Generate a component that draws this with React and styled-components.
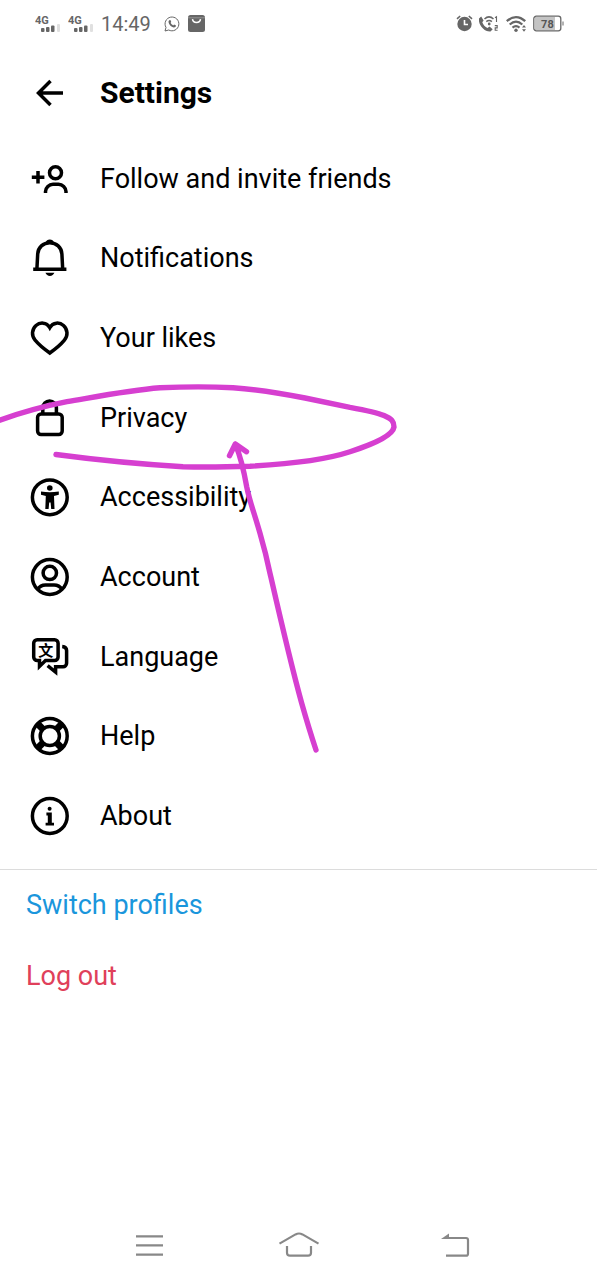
import styled, { createGlobalStyle } from "styled-components";

const color = {
  text: "#000",
  status: "#666",
  nav: "#888",
  line: "#dcdcdc",
  blue: "#1a96dc",
  red: "#e0405a",
  marker: "#d63fd0",
};

const GlobalStyle = createGlobalStyle`
  * {
    box-sizing: border-box;
  }

  body {
    margin: 0;
    background-color: #fff;
    color: ${color.text};
    font-family: Roboto, "Noto Sans CJK SC", sans-serif;
  }

  button {
    padding: 0;
    border: 0;
    background: none;
    color: inherit;
    font: inherit;
    cursor: pointer;
  }

  a {
    color: inherit;
    text-decoration: none;
  }

  svg {
    display: block;
    flex-shrink: 0;
  }
`;

const Page = styled.div`
  position: relative;
  display: flex;
  flex-direction: column;
  min-height: 100vh;
  overflow-x: hidden;
`;

const StatusBar = styled.div`
  display: flex;
  justify-content: space-between;
  align-items: center;
  height: 47px;
  padding: 0 33px 0 35px;
  color: ${color.status};
`;

const StatusGroup = styled.div`
  display: flex;
  align-items: center;
  gap: ${(props) => props.$gap}px;
`;

const StatusIcons = styled(StatusGroup)`
  padding-left: 7px;
`;

const Time = styled.time`
  font-size: 20px;
  line-height: 24px;
`;

const Header = styled.header`
  display: flex;
  align-items: center;
  gap: 28px;
  height: 92px;
  padding: 0 28px;

  h1 {
    margin: 0;
    font-size: 30px;
    line-height: 36px;
    font-weight: 700;
  }
`;

const MenuList = styled.ul`
  display: grid;
  grid-auto-rows: 1fr;
  min-height: 56vh;
  margin: 0;
  padding: 0;
  list-style: none;
`;

const MenuLink = styled.a`
  display: flex;
  align-items: center;
  gap: 28px;
  height: 100%;
  padding: 0 28px;
  font-size: 27px;
  line-height: 32px;
`;

const Actions = styled.div`
  display: flex;
  flex-direction: column;
  align-items: flex-start;
  width: 100%;
  margin-top: 13px;
  padding: 0 26px;
  border-top: 1px solid ${color.line};
`;

const ActionButton = styled.button`
  height: 71px;
  color: ${(props) => props.$color};
  font-size: 27px;
  line-height: 32px;
`;

const NavBar = styled.nav`
  display: flex;
  height: 70px;
  margin-top: auto;
  padding: 0 12.5%;
  color: ${color.nav};
`;

const NavButton = styled.button`
  display: flex;
  flex: 1;
  align-items: center;
  justify-content: center;
`;

const Marker = styled.svg`
  position: absolute;
  top: 0;
  left: 0;
  pointer-events: none;
`;

const Icon = ({ children }) => (
  <svg
    width="44"
    height="44"
    viewBox="0 0 44 44"
    fill="none"
    stroke="currentColor"
    strokeWidth="3.5"
    aria-hidden="true"
  >
    {children}
  </svg>
);

const BackIcon = () => (
  <Icon>
    <path d="M35 22H10.5M22.5 10 10.5 22l12 12" />
  </Icon>
);

const FollowIcon = () => (
  <Icon>
    <circle cx="27.5" cy="15.7" r="6" />
    <path d="M17.500 36v-1.500a7.500 7.500 0 0 1 7.500-7.200h5.500a7.500 7.500 0 0 1 7.500 7.200V36" />
    <path d="M10 14v12.600M3.800 20.300h12.600" />
  </Icon>
);

const BellIcon = () => (
  <Icon>
    <path d="M8.900 33.200 9.700 18C10.100 11.200 15.200 6.800 21.800 6.800S33.500 11.200 33.900 18l.8 15.200" />
    <path d="M5.200 33.200h33.200" />
    <path d="M17.600 6.600c.6-2 2-3.200 4.200-3.200s3.600 1.200 4.200 3.200z" fill="currentColor" stroke="none" />
    <path d="M17.400 36.700h9c-.8 2-2.400 3.200-4.500 3.200s-3.700-1.200-4.500-3.200z" fill="currentColor" stroke="none" />
  </Icon>
);

const HeartIcon = () => (
  <Icon>
    <path d="M21.800 11.600C18.600 5.900 11.800 6.100 8 9.500c-4.400 4-4.600 10.300-.9 14.700C10.400 28.200 16 33 21.800 37c5.800-4 11.300-8.800 14.600-12.800 3.700-4.400 3.500-10.700-.9-14.700-3.800-3.400-10.500-3.600-13.700 2.100z" />
  </Icon>
);

const LockIcon = () => (
  <Icon>
    <rect x="9.600" y="17.900" width="24.600" height="20.600" rx="3.400" />
    <path d="M14.800 17.600V11.800a6.800 6.800 0 0 1 13.600 0v5.800" />
  </Icon>
);

const AccessibilityIcon = () => (
  <Icon>
    <circle cx="21.800" cy="22.300" r="17.400" />
    <circle cx="21.800" cy="13" r="2.800" fill="currentColor" stroke="none" />
    <path
      d="M13 16.600c6 .9 11.600.9 17.800 0v3.200l-4.800 1.100.5 13h-3.300l-.6-6.400h-1.400l-.6 6.400h-3.300l.5-13-4.800-1.100z"
      fill="currentColor"
      stroke="none"
    />
  </Icon>
);

const AccountIcon = () => (
  <Icon>
    <circle cx="21.800" cy="22" r="17.400" />
    <circle cx="21.800" cy="17.900" r="6.700" />
    <path d="M9.500 34.600c2-3.200 4.600-4.600 8-4.600h8.600c3.400 0 6 1.400 8 4.600" />
  </Icon>
);

const LanguageIcon = () => (
  <Icon>
    <path d="M11.500 25.600v5.800l6-5.800h9.100a3.500 3.500 0 0 0 3.500-3.500V8.200a3.500 3.500 0 0 0-3.500-3.500H9.200a3.500 3.500 0 0 0-3.500 3.500v13.900a3.500 3.500 0 0 0 3.500 3.500z" />
    <path d="M34.200 11.600c2.800.2 4.400 1.400 4.400 4v12.600a3.500 3.500 0 0 1-3.500 3.500h-7.500v5.300l-8-6.400" />
    <text
      x="17.800"
      y="20.500"
      textAnchor="middle"
      fontFamily="'Noto Sans CJK SC', sans-serif"
      fontSize="15"
      fontWeight="700"
      fill="currentColor"
      stroke="none"
    >
      文
    </text>
  </Icon>
);

const HelpIcon = () => (
  <Icon>
    <circle cx="21.800" cy="22" r="17.400" />
    <circle cx="21.800" cy="22" r="9.600" />
    <path
      strokeWidth="7"
      d="m10.200 10.400 5.200 5.200M33.400 10.400l-5.200 5.200M10.200 33.600l5.200-5.200M33.400 33.600l-5.200-5.200"
    />
  </Icon>
);

const AboutIcon = () => (
  <Icon>
    <circle cx="21.800" cy="22" r="17.400" />
    <circle cx="21.600" cy="14.800" r="2" fill="currentColor" stroke="none" />
    <path
      d="M18.400 18.600h5.400v10.200h2.200v2.800h-8.400v-2.800h2.200v-7.400h-1.400z"
      fill="currentColor"
      stroke="none"
    />
  </Icon>
);

const SignalIcon = () => (
  <svg width="27" height="24" viewBox="0 0 27 24" fill="currentColor">
    <text x="0" y="12" fontSize="11" fontWeight="700">
      4G
    </text>
    <rect x="6" y="16" width="3.500" height="4" rx="1" />
    <rect x="11" y="15" width="3.500" height="5" rx="1" />
    <rect x="16" y="13.500" width="3.500" height="6.500" rx="1" />
    <rect x="22" y="12" width="3" height="8" rx="1" opacity="0.200" />
  </svg>
);

const ChatIcon = () => (
  <svg width="16" height="16" viewBox="0 0 16 16" fill="none" stroke="currentColor">
    <path d="M1 15l1-3.600a6.900 6.900 0 1 1 2.700 2.600z" />
    <path
      d="M5.200 4.200l1.200-.3.900 2-.7.900c.5 1.200 1.400 2 2.600 2.600l.9-.8 1.900 1c0 1.200-.9 2-2 2C7.300 11.400 4.500 8 4.500 5.800c0-.7.3-1.300.7-1.600z"
      fill="currentColor"
      stroke="none"
    />
  </svg>
);

const BagIcon = () => (
  <svg width="17" height="17" viewBox="0 0 17 17" fill="none">
    <rect width="17" height="17" rx="2.500" fill="currentColor" />
    <path d="M0 2.800h17" stroke="#fff" strokeWidth="0.600" opacity="0.500" />
    <path d="M4.500 4.200c.6 4.400 7.400 4.400 8 0" stroke="#fff" strokeWidth="1.500" />
  </svg>
);

const AlarmIcon = () => (
  <svg width="17" height="17" viewBox="0 0 17 17" fill="none">
    <circle cx="8.500" cy="9" r="7.200" fill="currentColor" />
    <path d="M1 3.800 4.200 1M16 3.800 12.800 1" stroke="currentColor" strokeWidth="1.600" />
    <path d="M8.500 5v4.500h3.500" stroke="#fff" strokeWidth="1.600" />
  </svg>
);

const WifiCallIcon = () => (
  <svg width="21" height="18" viewBox="0 0 21 18" fill="none" stroke="currentColor">
    <path
      d="M0 3.500 2.200 1.600l2.400 3.800-1.300 1.800c.8 2.400 2.800 4.800 5.200 5.800l2-1.400 3.200 2.600-2.200 2.300C5.200 17-1 9.500 0 3.500z"
      fill="currentColor"
      stroke="none"
    />
    <path d="M5.500 4c2.800-2.600 6.200-2.600 9 0M7.300 6.600c1.800-1.500 3.800-1.500 5.600 0" strokeWidth="1.500" />
    <circle cx="10.200" cy="9" r="1.400" fill="currentColor" stroke="none" />
    <path d="M16 2.800 17.500 1.800V7M15.800 10.600h2.400v2.300h-2v2.300h2.400" strokeWidth="1.100" />
  </svg>
);

const WifiIcon = () => (
  <svg width="21" height="18" viewBox="0 0 21 18" fill="none" stroke="currentColor">
    <path d="M.8 6.200c5.800-5.300 12.600-5.300 18.400 0" strokeWidth="2.400" />
    <path d="M3.700 9.500c4-3.600 8.600-3.600 12.600 0M6.500 12.700c2.300-2 4.700-2 7 0" strokeWidth="2.200" />
    <circle cx="10" cy="15.300" r="1.700" fill="currentColor" stroke="none" />
    <path d="m16 12.500 2-2.500 2 2.500zM16 14.200l2 2.500 2-2.500z" fill="currentColor" stroke="none" />
  </svg>
);

const BatteryIcon = () => (
  <svg width="31" height="17" viewBox="0 0 31 17" fill="none">
    <rect x="2" y="2" width="20" height="13" fill="#c4c4c4" />
    <rect x="0.800" y="1.200" width="27" height="14.600" rx="2.500" stroke="currentColor" strokeWidth="1.300" />
    <path d="M30 6.500v4" stroke="currentColor" />
    <text x="14.400" y="12.500" textAnchor="middle" fontSize="11" fontWeight="700" fill="#555">
      78
    </text>
  </svg>
);

const menuItems = [
  { label: "Follow and invite friends", icon: FollowIcon },
  { label: "Notifications", icon: BellIcon },
  { label: "Your likes", icon: HeartIcon },
  { label: "Privacy", icon: LockIcon },
  { label: "Accessibility", icon: AccessibilityIcon },
  { label: "Account", icon: AccountIcon },
  { label: "Language", icon: LanguageIcon },
  { label: "Help", icon: HelpIcon },
  { label: "About", icon: AboutIcon },
];

const NavIcon = ({ children }) => (
  <svg
    width="56"
    height="32"
    viewBox="0 0 56 32"
    fill="none"
    stroke="currentColor"
    strokeWidth="2.200"
    aria-hidden="true"
  >
    {children}
  </svg>
);

const App = () => {
  return (
    <>
      <GlobalStyle />
      <Page>
        <StatusBar>
          <StatusGroup $gap={6}>
            <SignalIcon />
            <SignalIcon />
            <Time>14:49</Time>
            <StatusIcons $gap={8}>
              <ChatIcon />
              <BagIcon />
            </StatusIcons>
          </StatusGroup>
          <StatusGroup $gap={6}>
            <AlarmIcon />
            <WifiCallIcon />
            <WifiIcon />
            <BatteryIcon />
          </StatusGroup>
        </StatusBar>

        <Header>
          <button type="button" aria-label="Back">
            <BackIcon />
          </button>
          <h1>Settings</h1>
        </Header>

        <MenuList>
          {menuItems.map(({ label, icon: ItemIcon }) => (
            <li key={label}>
              <MenuLink href="#">
                <ItemIcon />
                {label}
              </MenuLink>
            </li>
          ))}
        </MenuList>

        <Actions>
          <ActionButton type="button" $color={color.blue}>
            Switch profiles
          </ActionButton>
          <ActionButton type="button" $color={color.red}>
            Log out
          </ActionButton>
        </Actions>

        <NavBar>
          <NavButton type="button" aria-label="Recent apps">
            <NavIcon>
              <path d="M15 7.300h27M15 16.300h27M15 25.600h27" />
            </NavIcon>
          </NavButton>
          <NavButton type="button" aria-label="Home">
            <NavIcon>
              <path d="M8.500 14.600 24.500 5.400c2.300-1.200 4.700-1.200 7 0l16 9.200" />
              <path d="M16 17v6.700a3 3 0 0 0 3 3h18a3 3 0 0 0 3-3V17" />
            </NavIcon>
          </NavButton>
          <NavButton type="button" aria-label="Go back">
            <NavIcon>
              <path d="M25 9h21a2 2 0 0 1 2 2v13.700a2 2 0 0 1-2 2H26" />
              <path d="M21 10 29 4.600V10z" fill="currentColor" stroke="none" />
            </NavIcon>
          </NavButton>
        </NavBar>

        <Marker
          width="400"
          height="760"
          viewBox="0 0 400 760"
          fill="none"
          stroke={color.marker}
          strokeWidth="5.400"
          strokeLinecap="round"
          strokeLinejoin="round"
          aria-hidden="true"
        >
          <path d="M-4 421.500C25 411 45 406 67 401.700C100 396 130 390 160 387.700Q200 386 233 387.700C260 389.500 285 394 305 398L350 407.300C365 410 376 412 384 415.500C392 419 394 421.500 394 427C393 434 380 442 350 451.700C325 460 290 464 250 466.200Q210 467.500 183 466.700Q120 463 56 454.500" />
          <path d="M316 750Q309 729 301.700 703.300C290 661 280 617 270 573.300Q266 554 260 533.300C254 512 250 503 246.700 486.700Q242 460 235.300 444L229.500 455.700M235.300 444L246.500 451.700" />
        </Marker>
      </Page>
    </>
  );
};

export default App;
